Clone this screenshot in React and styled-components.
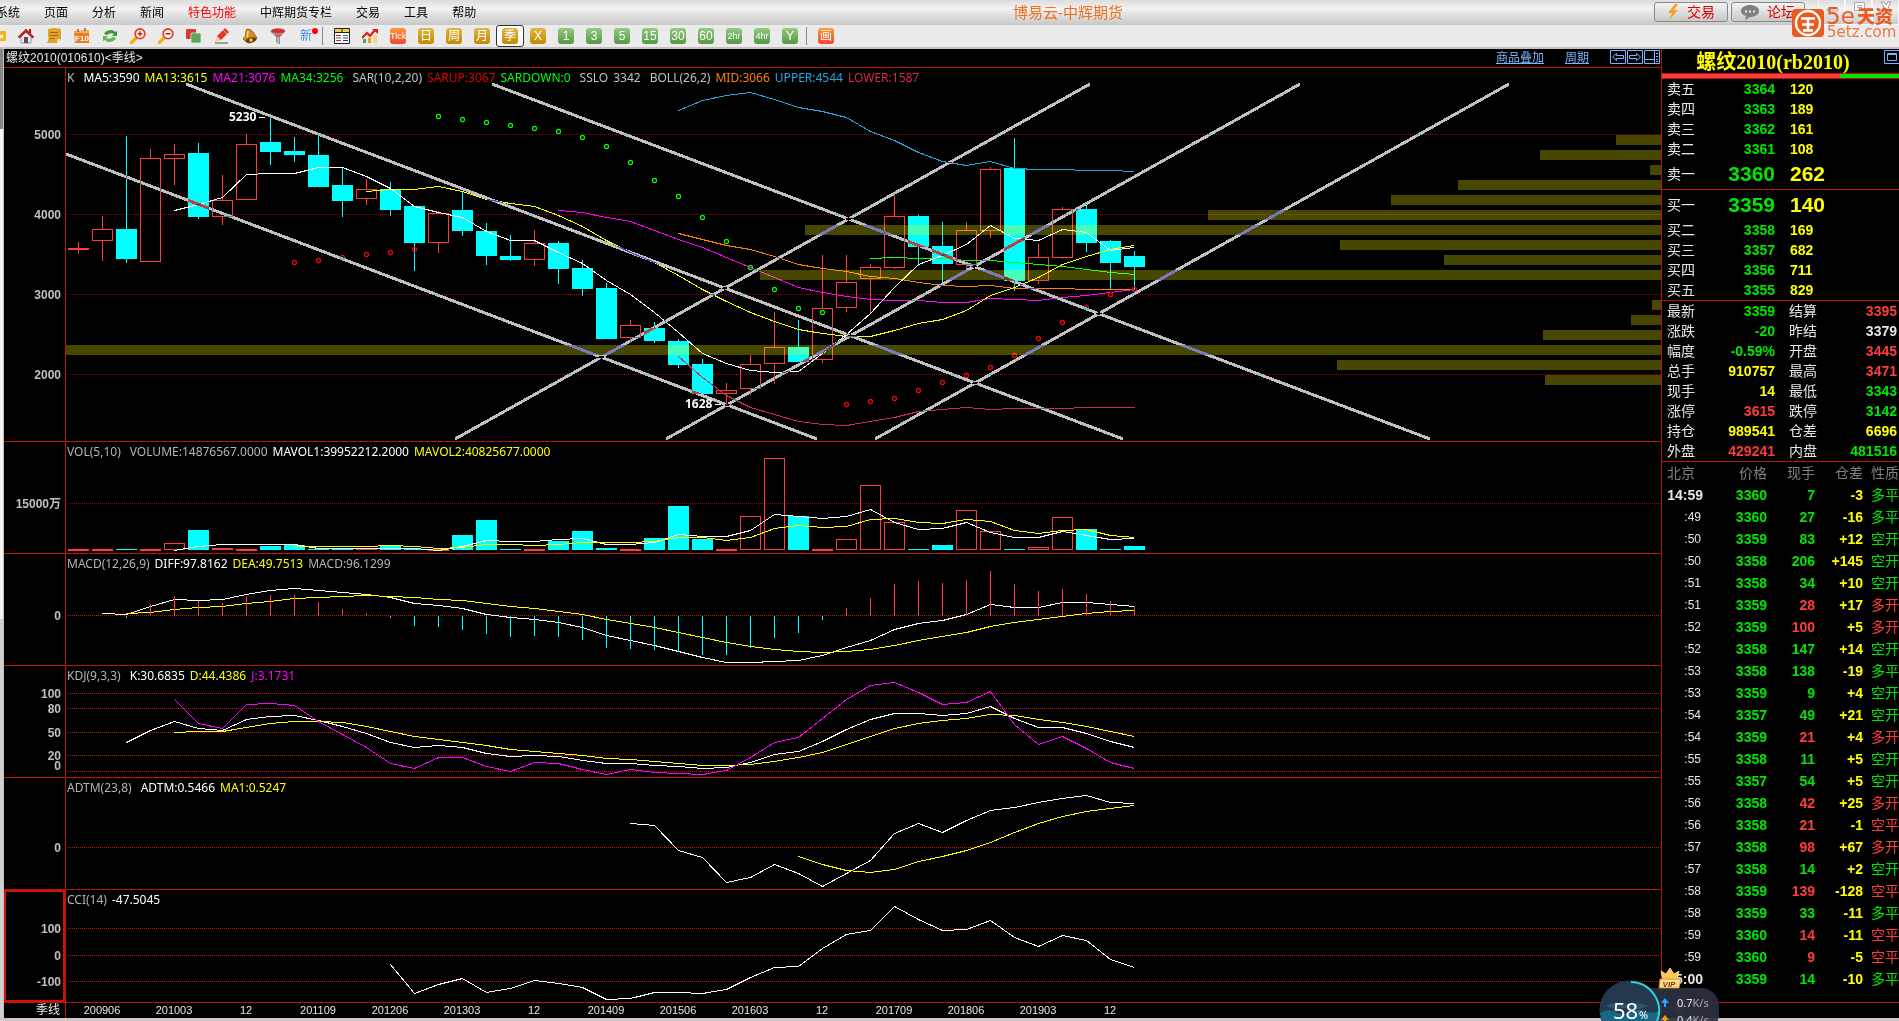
import styled, { createGlobalStyle, css } from 'styled-components';

const RED = '#ff3c3c';
const GREEN = '#00e600';
const YELLOW = '#ffff00';
const WHITE = '#e6e6e6';
const CYAN = '#00ffff';
const LINE = '#b81404';

const STEP = 24;
const BAR = 21;
const cx = (i) => 12 + STEP * i;

/* ---------- chart data (panel pixels) ---------- */

// high, body top, body bottom, low, 1 = rising
const candles = [
  [174, 180, 182, 186, 1], [148, 161, 173, 193, 1], [68, 161, 191, 195, 0], [81, 90, 194, 194, 1],
  [76, 86, 91, 117, 1], [75, 85, 149, 151, 0], [107, 132, 149, 157, 1], [66, 76, 132, 132, 1],
  [49, 74, 84, 97, 0], [69, 83, 87, 94, 0], [68, 87, 119, 119, 0], [99, 117, 133, 149, 0],
  [111, 121, 131, 137, 1], [114, 121, 142, 148, 0], [138, 138, 175, 203, 0], [143, 145, 175, 185, 1],
  [124, 142, 163, 168, 0], [155, 163, 188, 197, 0], [167, 188, 192, 193, 0], [162, 175, 192, 198, 1],
  [173, 175, 201, 216, 0], [192, 200, 221, 228, 0], [215, 220, 271, 271, 0], [252, 257, 270, 275, 1],
  [254, 260, 273, 275, 0], [271, 273, 297, 300, 0], [291, 296, 326, 326, 0], [315, 322, 326, 337, 1],
  [287, 296, 321, 327, 1], [244, 279, 296, 316, 1], [252, 279, 294, 294, 0], [187, 240, 292, 295, 1],
  [187, 214, 240, 244, 1], [196, 199, 211, 245, 1], [126, 148, 200, 201, 1], [147, 148, 179, 198, 0],
  [154, 178, 196, 214, 0], [154, 162, 197, 201, 1], [99, 101, 163, 170, 1], [70, 100, 213, 223, 0],
  [176, 189, 213, 216, 1], [139, 141, 190, 191, 1], [136, 141, 175, 184, 0], [172, 173, 195, 221, 0],
  [183, 188, 199, 222, 0],
];

const priceLines = [
  { color: '#29a3dc', from: 25, ys: [42, 32, 27, 24, 31, 39, 43, 49, 63, 72, 84, 93, 97, 93, 100, 101, 101, 102, 102, 103] },
  { color: '#d82848', from: 25, ys: [288, 309, 327, 339, 346, 353, 356, 357, 353, 349, 343, 341, 339, 341, 340, 340, 340, 339, 339, 339] },
  { color: '#ff8000', from: 25, ys: [165, 171, 177, 181, 188, 196, 200, 203, 208, 210, 214, 217, 218, 217, 220, 220, 220, 221, 221, 221] },
  { color: '#00ff00', from: 33, ys: [190, 189, 190, 190, 192, 192, 194, 196, 198, 201, 204, 206] },
  { color: '#ff00ff', from: 20, ys: [142, 144, 149, 153, 162, 171, 179, 189, 199, 209, 219, 224, 228, 231, 232, 232, 234, 234, 230, 231, 232, 229, 227, 224, 221] },
  { color: YELLOW, from: 12, ys: [123, 121, 121, 118, 123, 131, 135, 138, 147, 158, 172, 184, 194, 207, 221, 233, 244, 253, 261, 265, 268, 268, 262, 255, 251, 242, 227, 219, 209, 196, 188, 181, 177] },
  { color: '#ffffff', from: 4, ys: [142, 136, 129, 106, 105, 105, 99, 99, 108, 120, 138, 144, 149, 163, 172, 172, 184, 195, 212, 226, 244, 264, 285, 295, 302, 304, 303, 285, 266, 245, 219, 196, 187, 176, 157, 170, 172, 161, 164, 182, 179] },
];

const sar = [
  { color: '#ff0000', from: 9, ys: [194, 192, 189, 186, 184, 181] },
  { color: '#00ff00', from: 15, ys: [48, 51, 54, 57, 60, 63, 69, 78, 94, 112, 128, 149, 173, 199, 221, 240, 244] },
  { color: '#ff0000', from: 32, ys: [336, 333, 330, 322, 314, 307, 299, 287, 270, 254, 239, 226, 221] },
];

// [top, width] measured from the right edge of the plot
const profile = [
  [67, 45], [82, 121], [97, 11], [112, 203], [127, 270], [142, 453], [157, 856], [172, 321],
  [187, 217], [202, 901], [232, 9], [247, 30], [262, 118], [277, 1595], [292, 324], [307, 116],
];

const trends = [
  [120, 16, 1057, 371], [0, 86, 751, 371], [426, 16, 1364, 371],
  [389, 371, 1024, 16], [600, 371, 1234, 16], [809, 371, 1443, 16],
];

const volumeTops = [
  107, 107, 107, 107, 101, 88, 106, 107, 104, 103, 107, 107, 106, 103, 107, 107, 93, 78, 107, 107, 99, 89, 106,
  107, 96, 64, 97, 107, 74, 16, 74, 107, 97, 43, 80, 107, 103, 68, 89, 107, 105, 75, 87, 107, 104,
];

const volumeLines = [
  { color: '#ffffff', from: 4, ys: [108, 104, 102, 102, 102, 102, 106, 106, 106, 106, 106, 108, 104, 98, 99, 99, 97, 96, 102, 102, 100, 92, 94, 94, 88, 72, 74, 76, 74, 67, 80, 87, 86, 80, 90, 95, 95, 89, 93, 97, 96] },
  { color: YELLOW, from: 9, ys: [104, 104, 104, 104, 103, 104, 106, 105, 102, 102, 103, 102, 100, 100, 100, 99, 95, 95, 98, 95, 86, 83, 85, 84, 77, 76, 80, 81, 77, 79, 88, 91, 88, 87, 93, 95] },
];

const macdZero = 62;
const macdBars = {
  from: 2,
  ys: [64, 50, 42, 47, 49, 42, 41, 41, 48, 55, 59, 64, 72, 73, 76, 80, 83, 82, 83, 86, 94, 95, 96, 98, 101, 101, 94, 84, 79, 66, 54, 44, 30, 27, 29, 26, 17, 30, 37, 35, 40, 47, 52],
};
const macdLines = [
  { color: '#ffffff', from: 1, ys: [59, 60, 52, 45, 46, 45, 40, 36, 34, 36, 38, 40, 43, 49, 51, 54, 60, 63, 65, 68, 73, 81, 86, 91, 97, 103, 108, 108, 107, 106, 101, 93, 86, 75, 69, 66, 60, 50, 53, 53, 48, 48, 50, 52] },
  { color: YELLOW, from: 2, ys: [59, 58, 55, 53, 52, 49, 47, 44, 43, 42, 41, 42, 43, 45, 46, 49, 52, 54, 57, 60, 65, 69, 73, 78, 83, 88, 92, 95, 97, 98, 97, 95, 91, 86, 82, 78, 72, 68, 65, 62, 59, 57, 56] },
];

const kdjLines = [
  { color: '#ffffff', from: 2, ys: [76, 64, 55, 62, 64, 53, 50, 49, 54, 60, 67, 76, 81, 79, 81, 87, 90, 89, 90, 94, 97, 97, 99, 100, 102, 101, 96, 88, 85, 75, 63, 53, 47, 47, 49, 47, 40, 52, 61, 61, 67, 75, 81] },
  { color: YELLOW, from: 4, ys: [66, 65, 65, 61, 57, 55, 55, 56, 60, 65, 70, 73, 76, 79, 83, 85, 87, 89, 92, 93, 95, 97, 99, 99, 98, 95, 91, 86, 78, 70, 62, 57, 54, 52, 48, 49, 53, 56, 60, 65, 70] },
  { color: '#ff00ff', from: 4, ys: [33, 57, 62, 38, 37, 39, 55, 68, 81, 97, 102, 91, 91, 100, 105, 96, 97, 103, 108, 103, 106, 107, 108, 104, 91, 76, 71, 52, 33, 19, 16, 26, 38, 36, 25, 58, 78, 70, 82, 96, 102] },
];

const adtmLines = [
  { color: '#ffffff', from: 23, ys: [45, 47, 72, 79, 104, 99, 86, 95, 108, 95, 82, 55, 45, 54, 42, 32, 29, 24, 20, 17, 24, 25] },
  { color: YELLOW, from: 30, ys: [78, 86, 92, 94, 91, 83, 78, 72, 64, 54, 45, 38, 33, 30, 27] },
];

const cciLines = [
  { color: '#ffffff', from: 13, ys: [74, 103, 94, 88, 102, 98, 90, 93, 97, 109, 108, 102, 102, 103, 99, 87, 77, 76, 58, 44, 40, 16, 29, 40, 39, 30, 47, 56, 45, 50, 69, 77] },
];

const dates = ['200906', '201003', '12', '201109', '201206', '201303', '12', '201409', '201506', '201603', '12', '201709', '201806', '201903', '12'];

/* ---------- quote data ---------- */

const asks = [['卖五', 3364, 120], ['卖四', 3363, 189], ['卖三', 3362, 161], ['卖二', 3361, 108], ['卖一', 3360, 262, true]];
const bids = [['买一', 3359, 140, true], ['买二', 3358, 169], ['买三', 3357, 682], ['买四', 3356, 711], ['买五', 3355, 829]];

const stats = [
  ['最新', '3359', GREEN, '结算', '3395', RED],
  ['涨跌', '-20', GREEN, '昨结', '3379', WHITE],
  ['幅度', '-0.59%', GREEN, '开盘', '3445', RED],
  ['总手', '910757', YELLOW, '最高', '3471', RED],
  ['现手', '14', YELLOW, '最低', '3343', GREEN],
  ['涨停', '3615', RED, '跌停', '3142', GREEN],
  ['持仓', '989541', YELLOW, '仓差', '6696', YELLOW],
  ['外盘', '429241', RED, '内盘', '481516', GREEN],
];

const ticks = [
  ['14:59', 3360, 7, '-3', '多平', 0], [':49', 3360, 27, '-16', '多平', 0], [':50', 3359, 83, '+12', '空开', 0],
  [':50', 3358, 206, '+145', '空开', 0], [':51', 3358, 34, '+10', '空开', 0], [':51', 3359, 28, '+17', '多开', 1],
  [':52', 3359, 100, '+5', '多开', 1], [':52', 3358, 147, '+14', '空开', 0], [':53', 3358, 138, '-19', '多平', 0],
  [':53', 3359, 9, '+4', '空开', 0], [':54', 3357, 49, '+21', '空开', 0], [':54', 3359, 21, '+4', '多开', 1],
  [':55', 3358, 11, '+5', '空开', 0], [':55', 3357, 54, '+5', '空开', 0], [':56', 3358, 42, '+25', '多开', 1],
  [':56', 3358, 21, '-1', '空平', 1], [':57', 3358, 98, '+67', '多开', 1], [':57', 3358, 14, '+2', '空开', 0],
  [':58', 3359, 139, '-128', '空平', 1], [':58', 3359, 33, '-11', '多平', 0], [':59', 3360, 14, '-11', '空平', 1],
  [':59', 3360, 9, '-5', '空平', 1], ['15:00', 3359, 14, '-10', '多平', 0],
];

/* ---------- icons ---------- */

const Icon = ({ children }) => <svg width="16" height="16" viewBox="0 0 16 16" aria-hidden="true">{children}</svg>;

const Magnifier = ({ plus }) => (
  <Icon>
    <path d="M6.5 9.5 1.5 14.5" stroke="#f0b010" strokeWidth="3.2" strokeLinecap="round" />
    <circle cx="10" cy="5.8" r="4.8" fill="#fff" stroke="#e8402c" strokeWidth="1.8" />
    <path d={plus ? 'M7.5 5.8h5M10 3.3v5' : 'M7.5 5.8h5'} stroke="#e02010" strokeWidth="1.6" />
  </Icon>
);

const icons = {
  folder: <Icon><path d="M2 3h14v10H2z" fill="#f5b818" /><path d="M4 7h9v3H4z" fill="#fff" /></Icon>,
  home: (
    <Icon>
      <path d="M3 8v7h10V8L8 4z" fill="#e8eef4" stroke="#8898a8" />
      <path d="M11 1h2v4h-2z" fill="#a01818" />
      <path d="M0 9 8 1l8 8-1.5 1L8 4 1.5 10z" fill="#d01c24" stroke="#a01018" strokeWidth=".6" />
      <path d="M6 9h4v6H6z" fill="#704838" />
    </Icon>
  ),
  note: (
    <Icon>
      <path d="M2 1q7-2 13 0v10l-4 4H1q2-3 1-7z" fill="#e0a22c" />
      <path d="M15 11h-4v4z" fill="#f8dc98" />
      <path d="M4 4.500h8M4 7.500h8M4 10.500h5" stroke="#a86c10" />
    </Icon>
  ),
  f10: (
    <Icon>
      <path d="M0 3.500 15 2v13H1z" fill="#ee7a24" />
      <path d="M0 3.500 15 2v3H0z" fill="#f8ae50" />
      <path d="M4 1v3M11 0v3" stroke="#b85010" strokeWidth="1.5" />
      <text x="8" y="13" fontSize="8" fontWeight="700" textAnchor="middle" fill="#fff" fontFamily="Liberation Sans">F10</text>
    </Icon>
  ),
  refresh: (
    <Icon>
      <path d="M2 6q2-4 7-4 3 0 4 2l2-1v5h-5l2-2q-4-2-7 1z" fill="#3c9a34" />
      <path d="M14 10q-2 4-7 4-3 0-4-2l-2 1V8h5l-2 2q4 2 7-1z" fill="#62b84c" />
    </Icon>
  ),
  zoomIn: <Magnifier plus />,
  zoomOut: <Magnifier />,
  layers: (
    <Icon>
      <rect x="0" y="1" width="10" height="10" rx="1" fill="#d83c34" />
      <rect x="5" y="5" width="10" height="10" rx="1" fill="#62a458" stroke="#d8ecd0" strokeWidth=".8" />
    </Icon>
  ),
  pencil: (
    <Icon>
      <path d="M1 15h13" stroke="#555" />
      <path d="m1 14 2-6 4 4z" fill="#f5cf90" />
      <path d="M3 8 11 0l4 4-8 8z" fill="#e43828" />
      <path d="m9 2 4 4" stroke="#f8a090" />
    </Icon>
  ),
  bell: (
    <Icon>
      <path d="M5 1q4 0 6 3l4 6q-3 5-9 5l-5-4q3-2 3-8z" fill="#d89020" stroke="#8a5208" strokeWidth=".8" />
      <ellipse cx="9" cy="12" rx="5.5" ry="2.5" fill="#6a3c08" transform="rotate(-12 9 12)" />
      <circle cx="9" cy="12" r="1.7" fill="#f8d060" />
      <path d="M6 3q0 4-1 6" stroke="#fbe090" strokeWidth="1.4" fill="none" />
    </Icon>
  ),
  filter: (
    <Icon>
      <path d="M1 3.500 6.500 9v5l3 2V9L15 3.500z" fill="#b8b8b8" stroke="#777" strokeWidth=".7" />
      <ellipse cx="8" cy="3" rx="7" ry="2.400" fill="#e02828" stroke="#888" strokeWidth=".7" />
      <path d="M4 5.500 6.500 9h3L12 5.500q-4 2-8 0z" fill="#e05050" />
    </Icon>
  ),
  list: (
    <Icon>
      <path d="M.5.5h15v15H.5z" fill="#fff" stroke="#222" />
      <path d="M1 1h14v3H1z" fill="#f5d050" />
      <path d="M.5 4.500h15M8 1v3" stroke="#222" />
      <path d="M2 7.500h5M2 12.500h5" stroke="#e02020" />
      <path d="M2 10h5M9 7.500h5" stroke="#209020" />
      <path d="M9 10h5M9 12.500h5" stroke="#2030a0" />
    </Icon>
  ),
  trend: (
    <Icon>
      <path d="M1 11h3v4H1z" fill="#58a838" />
      <path d="M6 10h3v5H6z" fill="#e8a020" />
      <path d="M11 7h4v8h-4z" fill="#f0d888" />
      <path d="m0 10 5-5 3 3 5-6" stroke="#e01818" strokeWidth="2" fill="none" />
      <path d="M10 1h6v5z" fill="#e01818" />
    </Icon>
  ),
};

const tools = [
  { label: '打开', icon: 'folder' }, { label: '首页', icon: 'home' }, { label: '公告', icon: 'note' },
  { label: '资料', icon: 'f10' }, { label: '刷新', icon: 'refresh' }, { label: '放大', icon: 'zoomIn' },
  { label: '缩小', icon: 'zoomOut' }, { label: '叠加', icon: 'layers' }, { label: '画线', icon: 'pencil' },
  { label: '预警', icon: 'bell' }, { label: '过滤', icon: 'filter' }, { text: '新', tone: 'news' }, { sep: true },
  { label: '报价', icon: 'list' }, { label: '分时', icon: 'trend' }, { text: 'Tick', tone: 'red' },
  { text: '日', tone: 'gold' }, { text: '周', tone: 'gold' }, { text: '月', tone: 'gold' },
  { text: '季', tone: 'gold', active: true }, { text: 'X', tone: 'gold' }, { text: '1', tone: 'green' },
  { text: '3', tone: 'green' }, { text: '5', tone: 'green' }, { text: '15', tone: 'green' },
  { text: '30', tone: 'green' }, { text: '60', tone: 'green' }, { text: '2hr', tone: 'green' },
  { text: '4hr', tone: 'green' }, { text: 'Y', tone: 'green' }, { sep: true }, { text: '画', tone: 'red' },
];

const menus = ['系统', '页面', '分析', '新闻', '特色功能', '中辉期货专栏', '交易', '工具', '帮助'];

/* ---------- chart parts ---------- */

const Series = ({ lines }) => lines.map(({ color, from, ys }, n) => (
  <polyline key={n} fill="none" stroke={color} points={ys.map((y, i) => `${cx(from + i) + 0.5},${y + 0.5}`).join(' ')} />
));

const Grid = ({ rows, color = '#c81400' }) => rows.map((y) => (
  <line key={y} x1="2" x2="100%" y1={y + 0.5} y2={y + 0.5} stroke={color} strokeDasharray="1 1" />
));

const Bar = ({ i, top, bottom, up }) => {
  const x = cx(i) - 10;
  return up
    ? <rect x={x + 0.5} y={top + 0.5} width={BAR - 1} height={Math.max(bottom - top - 1, 0.5)} fill="none" stroke={RED} />
    : <rect x={x} y={top} width={BAR} height={bottom - top} fill={CYAN} />;
};

function Panel({ height, ticks: marks, readout, active, children }) {
  return (
    <PanelRow $height={height}>
      <Axis $active={active}>
        <Plot>
          {marks.map(([y, text]) => <AxisText key={text} x="57" y={y + 4} textAnchor="end">{text}</AxisText>)}
        </Plot>
      </Axis>
      <PlotArea>
        <Plot>{children}</Plot>
        <Readout>
          {readout.map(([text, color, wide]) => <Value key={text} $color={color} $wide={wide}>{text}</Value>)}
        </Readout>
      </PlotArea>
    </PanelRow>
  );
}

function PricePanel() {
  const gray = '#c0c0c0';
  return (
    <Panel
      height={373}
      ticks={[[67, '5000'], [147, '4000'], [227, '3000'], [307, '2000']]}
      readout={[
        ['K', gray, 1], ['MA5:3590', '#ffffff'], ['MA13:3615', YELLOW], ['MA21:3076', '#ff00ff'], ['MA34:3256', '#00ff00', 1],
        ['SAR(10,2,20)', gray], ['SARUP:3067', '#e00000'], ['SARDOWN:0', '#00ff00', 1], ['SSLO', gray], ['3342', gray, 1],
        ['BOLL(26,2)', gray], ['MID:3066', '#ff8000'], ['UPPER:4544', '#29a3dc'], ['LOWER:1587', '#d82848'],
      ]}
    >
      <Grid rows={[66, 146, 226, 306]} color="#a00000" />
      {candles.map(([hi, top, bottom, lo, up], i) => (
        <g key={i}>
          <path
            d={`M${cx(i) + 0.5} ${hi}V${up ? top : bottom}M${cx(i) + 0.5} ${bottom}V${lo}`}
            stroke={up ? RED : CYAN}
          />
          <Bar i={i} top={top} bottom={bottom} up={up} />
        </g>
      ))}
      <Series lines={priceLines} />
      {sar.map(({ color, from, ys }) => ys.map((y, i) => (
        <ellipse key={`${from}-${i}`} cx={cx(from + i) + 0.5} cy={y + 0.5} rx="2" ry="2.2" fill="none" stroke={color} strokeWidth="1.2" shapeRendering="auto" />
      )))}
      <svg x="100%" overflow="visible">
        {profile.map(([top, width]) => <rect key={top} x={-width} y={top} width={width} height="10" fill="rgba(255,255,0,.28)" />)}
      </svg>
      {trends.map(([x1, y1, x2, y2], i) => <Trend key={i} x1={x1} y1={y1} x2={x2} y2={y2} />)}
      <MarkText x="163" y="53">5230</MarkText>
      <MarkText x="619" y="340">1628</MarkText>
      <path d="M193 49.500h6M649 336.500h6" stroke="#fff" />
    </Panel>
  );
}

function Charts() {
  const gray = '#b4b4b4';
  return (
    <>
      <PricePanel />
      <Panel
        height={111}
        ticks={[[62, '15000万']]}
        readout={[['VOL(5,10)', gray, 1], ['VOLUME:14876567.0000', gray], ['MAVOL1:39952212.2000', '#ffffff'], ['MAVOL2:40825677.0000', YELLOW]]}
      >
        <Grid rows={[61]} color="#a00000" />
        {volumeTops.map((top, i) => <Bar key={i} i={i} top={top} bottom={108} up={candles[i][4]} />)}
        <Series lines={volumeLines} />
      </Panel>
      <Panel
        height={111}
        ticks={[[62, '0']]}
        readout={[['MACD(12,26,9)', gray], ['DIFF:97.8162', '#ffffff'], ['DEA:49.7513', YELLOW], ['MACD:96.1299', gray]]}
      >
        <Grid rows={[61]} />
        <Series lines={macdLines} />
        {macdBars.ys.map((y, i) => (
          <path key={i} d={`M${cx(macdBars.from + i) + 0.5} ${y}V${macdZero}`} stroke={y < macdZero ? RED : CYAN} />
        ))}
      </Panel>
      <Panel
        height={111}
        ticks={[[28, '100'], [43, '80'], [67, '50'], [90, '20'], [100, '0']]}
        readout={[['KDJ(9,3,3)', gray, 1], ['K:30.6835', '#ffffff'], ['D:44.4386', YELLOW], ['J:3.1731', '#ff00ff']]}
      >
        <Grid rows={[27, 42, 66, 89, 105]} />
        <Series lines={kdjLines} />
      </Panel>
      <Panel
        height={111}
        ticks={[[70, '0']]}
        readout={[['ADTM(23,8)', gray, 1], ['ADTM:0.5466', '#ffffff'], ['MA1:0.5247', YELLOW]]}
      >
        <Grid rows={[69]} />
        <Series lines={adtmLines} />
      </Panel>
      <Panel
        height={112}
        active
        ticks={[[39, '100'], [66, '0'], [92, '-100']]}
        readout={[['CCI(14)', gray], ['-47.5045', '#ffffff']]}
      >
        <Grid rows={[38, 65, 91]} />
        <Series lines={cciLines} />
      </Panel>
      <TimeAxis>
        <PeriodName>季线</PeriodName>
        {dates.map((d, i) => <DateLabel key={i}>{d}</DateLabel>)}
      </TimeAxis>
    </>
  );
}

/* ---------- side panel ---------- */

const Book = ({ rows, caption }) => (
  <QuoteTable aria-label={caption}>
    <colgroup><Col $w={46} /><Col $w={67} /><col /></colgroup>
    <tbody>
      {rows.map(([name, price, size, big]) => (
        <Row key={name} $h={big ? 30 : 20}>
          <Name scope="row">{name}</Name>
          <Num $color={GREEN} $big={big}>{price}</Num>
          <Num $color={YELLOW} $big={big} $left>{size}</Num>
        </Row>
      ))}
    </tbody>
  </QuoteTable>
);

function Quotes() {
  return (
    <Side>
      <SideHead>
        <Instrument>螺纹2010(rb2010)</Instrument>
        <IconButton aria-label="最大化">
          <svg width="15" height="14" viewBox="0 0 15 14"><path d="M.5.5h16v13H.5z" fill="none" stroke="#78b4ff" /><path d="M3.500 3.500h9v7h-9zM3 4.500h10" fill="none" stroke="#78b4ff" /></svg>
        </IconButton>
      </SideHead>
      <Ratio><RatioBuy style={{ flexGrow: 178 }} /><RatioSell style={{ flexGrow: 59 }} /></Ratio>
      <Book rows={asks} caption="卖盘" />
      <Book rows={bids} caption="买盘" />
      <QuoteTable aria-label="行情">
        <colgroup><Col $w={46} /><Col $w={67} /><Col $w={60} /><col /></colgroup>
        <tbody>
          {stats.map(([a, av, ac, b, bv, bc]) => (
            <Row key={a} $h={20}>
              <Name scope="row">{a}</Name>
              <Num $color={ac}>{av}</Num>
              <Name scope="row" $inset>{b}</Name>
              <Num $color={bc} $edge>{bv}</Num>
            </Row>
          ))}
        </tbody>
      </QuoteTable>
      <QuoteTable aria-label="成交明细" $plain>
        <colgroup><Col $w={41} /><Col $w={64} /><Col $w={48} /><Col $w={48} /><col /></colgroup>
        <thead>
          <Row $h={22}>
            <Head $left>北京</Head><Head>价格</Head><Head>现手</Head><Head>仓差</Head><Head>性质</Head>
          </Row>
        </thead>
        <tbody>
          {ticks.map(([time, price, size, diff, kind, up], i) => (
            <Row key={i} $h={22}>
              <Time $full={time.length > 3}>{time}</Time>
              <Num $color={GREEN}>{price}</Num>
              <Num $color={up ? RED : GREEN}>{size}</Num>
              <Num $color={YELLOW}>{diff}</Num>
              <Kind $color={up ? RED : GREEN}>{kind}</Kind>
            </Row>
          ))}
        </tbody>
      </QuoteTable>
      <Tabs><Tab>笔</Tab></Tabs>
    </Side>
  );
}

/* ---------- floating bits ---------- */

const Watermark = () => (
  <Mark width="104" height="32" viewBox="0 0 104 32" aria-label="5e天资 5etz.com">
    <rect x="0" y="2" width="32" height="28" rx="4" fill="#e85c20" />
    <circle cx="16" cy="16" r="12" fill="none" stroke="#fff" strokeWidth="2.400" />
    <path d="M9 11.500h14M16 11.500v12M10 17.500h12M11 23.500h10" stroke="#fff" strokeWidth="2.600" fill="none" />
    <text x="34" y="17" fontSize="23" fill="#e85c20" fontFamily="DejaVu Sans">5e</text>
    <text x="65" y="16" fontSize="18" fontWeight="900" fill="#e85c20" fontFamily="Noto Sans CJK SC">天资</text>
    <text x="35" y="30" fontSize="15" fill="#e87848" fontFamily="DejaVu Sans">5etz.com</text>
  </Mark>
);

const NetWidget = () => (
  <Net width="122" height="54" viewBox="0 0 122 54">
    <rect x="36" y="21" width="85" height="44" rx="18" fill="#2c3040" fillOpacity=".92" />
    <circle cx="31" cy="43" r="29.500" fill="#24384e" />
    <path d="M2 46q8-5 16-1t14 0 14-1 14 0v10H4z" fill="#176880" />
    <path d="M8 39q10-6 18-1 12-5 24 1-12 6-24 2-10 3-18-2z" fill="#2c5468" />
    <path d="M33 15a28.500 28.500 0 0 1 26 39" fill="none" stroke="#28d8d8" strokeWidth="2" />
    <text x="15" y="52" fontSize="22" fill="#fff" fontFamily="Noto Sans">58</text>
    <text x="41" y="52" fontSize="11" fill="#fff" fontFamily="Noto Sans">%</text>
    <path d="m67 31 4 5h-3v4h-2v-4h-3z" fill="#20a8ff" />
    <path d="m67 48 4 5h-3v4h-2v-4h-3z" fill="#ff9820" />
    <text x="79" y="40" fontSize="11" fill="#e8e8e8" fontFamily="Noto Sans">0.7<tspan fill="#a8a8a8">K/s</tspan></text>
    <text x="79" y="57" fontSize="11" fill="#e8e8e8" fontFamily="Noto Sans">0.4<tspan fill="#a8a8a8">K/s</tspan></text>
    <path d="m65 13-2-9 5 3 4-6 4 6 5-3-2 9z" fill="#ffc84c" stroke="#fff0c0" strokeWidth=".8" />
    <path d="M62 12h21l-2 9H61z" fill="#ffd88c" stroke="#d08820" strokeWidth=".8" />
    <text x="71" y="20" fontSize="8" fontWeight="700" fontStyle="italic" textAnchor="middle" fill="#7a4008" fontFamily="Liberation Sans">VIP</text>
  </Net>
);

function App() {
  return (
    <Page>
      <GlobalStyle />
      <MenuBar>
        <Menu>
          {menus.map((m) => <MenuItem key={m} $hot={m === '特色功能'}>{m}</MenuItem>)}
        </Menu>
        <AppTitle>博易云-中辉期货</AppTitle>
        <Actions>
          <ActionButton>
            <svg width="12" height="16" viewBox="0 0 12 16"><path d="M8 0 1 9h4l-3 7 9-10H7l4-6z" fill="#f5a020" /></svg>
            交易
          </ActionButton>
          <ActionButton>
            <svg width="18" height="15" viewBox="0 0 18 15"><path d="M9 0c5 0 9 2.500 9 6s-4 6-9 6l-5 3 1-4C2 10 0 8.500 0 6c0-3.500 4-6 9-6z" fill="#808080" /><path d="M4 5.500h2v2H4zM8 5.500h2v2H8zM12 5.500h2v2h-2z" fill="#e8e8e8" /></svg>
            论坛
          </ActionButton>
        </Actions>
        <WindowButtons>
          <WindowButton aria-label="最小化"><Icon><path d="M3 8h11v2H3z" fill="#fff" stroke="#aaa" /></Icon></WindowButton>
          <WindowButton aria-label="还原"><Icon><path d="M3.500 1.500h10v8h-10zM6.500 4.500h4v2h-4z" fill="#fff" stroke="#aaa" /></Icon></WindowButton>
          <WindowButton aria-label="关闭"><Icon><path d="M3 1h3l2 3 2-3h3l-3 5 3 4h-3L8 7l-2 3H3l3-4z" fill="#fff" stroke="#999" /></Icon></WindowButton>
        </WindowButtons>
      </MenuBar>
      <Toolbar>
        {tools.map((t, i) => (t.sep ? <Separator key={i} /> : (
          <Tool key={i} $active={t.active} aria-label={t.label}>
            {t.icon ? icons[t.icon] : <Badge $tone={t.tone} $small={t.text.length > 2}>{t.text}</Badge>}
            {t.tone === 'news' && <Dot />}
          </Tool>
        )))}
      </Toolbar>
      <Workspace>
        <Gutter />
        <Main>
          <ChartHead>
            <ChartName>螺纹2010(010610)&lt;季线&gt;</ChartName>
            <HeadLink href="#overlay">商品叠加</HeadLink>
            <HeadLink href="#period">周期</HeadLink>
            <HeadIcons>
              <IconButton aria-label="后退">
                <svg width="16" height="14" viewBox="0 0 16 14"><path d="M.5.5h15v13H.5zM2.500 7l4-3.500v2h7v3h-7v2z" fill="none" stroke="#78b4ff" /></svg>
              </IconButton>
              <IconButton aria-label="前进">
                <svg width="16" height="14" viewBox="0 0 16 14"><path d="M.5.5h15v13H.5zM13.500 7l-4-3.500v2h-7v3h7v2z" fill="none" stroke="#78b4ff" /></svg>
              </IconButton>
              <IconButton aria-label="布局">
                <svg width="16" height="14" viewBox="0 0 16 14"><path d="M.5.5h15v13H.5zM10.500 0v14M0 9.500h10M12 3.500h2M12 6.500h2M12 9.500h2M12 11.500h2" fill="none" stroke="#78b4ff" /></svg>
              </IconButton>
            </HeadIcons>
          </ChartHead>
          <Charts />
        </Main>
        <Quotes />
      </Workspace>
      <Footer />
      <Watermark />
      <NetWidget />
    </Page>
  );
}

export default App;

/* ---------- styles ---------- */

const GlobalStyle = createGlobalStyle`
  *, *::before, *::after { box-sizing: border-box; }
  body {
    margin: 0;
    background: #000;
    color: ${WHITE};
    font: 12px "Liberation Sans", "Noto Sans CJK SC", sans-serif;
  }
  button { font: inherit; margin: 0; padding: 0; border: 0; background: none; color: inherit; }
  svg { display: block; }
`;

const Page = styled.div`
  position: relative;
  min-height: 100vh;
  display: flex;
  flex-direction: column;
  overflow: hidden;
`;

const MenuBar = styled.header`
  display: flex;
  height: 25px;
  background: linear-gradient(#dcdcdc, #f2f2f2 35%, #e4e4e4 55%, #c8c8c8);
  color: #000;
`;

const Menu = styled.nav`
  display: flex;
  gap: 24px;
  margin-left: -4px;
`;

const MenuItem = styled.button`
  line-height: 26px;
  white-space: nowrap;
  color: ${({ $hot }) => ($hot ? '#ff0000' : '#000')};
`;

const AppTitle = styled.div`
  flex: 1;
  padding-left: 6px;
  text-align: center;
  font-size: 15px;
  line-height: 25px;
  color: #f07020;
`;

const Actions = styled.div`
  display: flex;
  gap: 3px;
  padding-top: 2px;
`;

const ActionButton = styled.button`
  display: flex;
  align-items: center;
  justify-content: center;
  gap: 8px;
  width: 74px;
  height: 20px;
  border: 1px solid #888;
  border-radius: 3px;
  background: linear-gradient(#f4f4f4, #c8c8c8);
  color: #e00000;
  font-size: 14px;
  line-height: 18px;
`;

const WindowButtons = styled.div`
  display: flex;
  margin-left: 13px;
`;

const WindowButton = styled.button`
  display: flex;
  justify-content: center;
  width: 27px;
  height: 25px;
  padding-top: 1px;
  border: solid #f8f8f8;
  border-width: 0 1px 1px;
`;

const Toolbar = styled.div`
  display: flex;
  height: 24px;
  padding-right: 16px;
  background: #ebebeb;
  border-bottom: 2px solid #c8c0c0;

  > :first-child { margin-left: -16px; }
`;

const Tool = styled.button`
  position: relative;
  display: flex;
  align-items: center;
  justify-content: center;
  width: 28px;
  height: 22px;
  ${({ $active }) => $active && css`
    background: #fff;
    border: 1px solid #333;
    border-radius: 3px;
  `}
`;

const Separator = styled.i`
  width: 1px;
  height: 18px;
  margin: 2px 5px 0 2px;
  background: #888;
`;

const tones = {
  gold: 'linear-gradient(#dcb848, #c48800)',
  green: 'linear-gradient(#94cc80, #559646)',
  red: 'linear-gradient(#ff9a40, #f04830)',
  news: 'none',
};

const Badge = styled.span`
  width: 16px;
  height: 16px;
  border-radius: 3px;
  background: ${({ $tone }) => tones[$tone]};
  color: ${({ $tone }) => ($tone === 'news' ? '#3c8ce8' : '#fff')};
  font-size: ${({ $small }) => ($small ? 9 : 12)}px;
  line-height: 16px;
  text-align: center;
`;

const Dot = styled.i`
  position: absolute;
  top: 3px;
  right: 2px;
  width: 6px;
  height: 6px;
  border-radius: 50%;
  background: #ff0000;
`;

const Workspace = styled.div`
  display: flex;
  flex: 1;
`;

const Gutter = styled.div`
  width: 4px;
  border-right: 1px solid #c8c0c0;
  background: linear-gradient(#888 80px, #f4f4f0 80px 570px, #d0d0d0 570px);
`;

const Main = styled.main`
  flex: 1;
  min-width: 0;
`;

const ChartHead = styled.div`
  display: flex;
  height: 19px;
  padding: 1px 1px 0 2px;
  border-bottom: 1px solid ${LINE};
  line-height: 17px;
`;

const ChartName = styled.h1`
  flex: 1;
  margin: 0;
  font-size: 12px;
  font-weight: 400;
`;

const HeadLink = styled.a`
  margin-right: 21px;
  color: #78b4ff;
`;

const HeadIcons = styled.div`
  display: flex;
  gap: 1px;
`;

const IconButton = styled.button`
  height: 14px;
`;

const PanelRow = styled.section`
  display: flex;
  height: ${({ $height }) => $height + 1}px;
  border-bottom: 1px solid ${LINE};
`;

const Axis = styled.div`
  flex: none;
  width: 62px;
  border-right: 1px solid ${LINE};
  ${({ $active }) => $active && css`box-shadow: inset 0 0 0 2px #d01400;`}
`;

const PlotArea = styled.div`
  position: relative;
  flex: 1;
  min-width: 0;
`;

const Plot = styled.svg`
  width: 100%;
  height: 100%;
  overflow: hidden;
  shape-rendering: crispEdges;
`;

const Trend = styled.line`
  stroke: #c0c0c0;
  stroke-width: 3px;
  mix-blend-mode: difference;
`;

const AxisText = styled.text`
  fill: #c0c0c0;
  font-size: 12px;
  font-weight: 700;
`;

const MarkText = styled.text`
  fill: #fff;
  font: bold 12px "Noto Sans", sans-serif;
`;

const Readout = styled.div`
  position: absolute;
  top: 0;
  left: 1px;
  display: flex;
  gap: 5px;
  font-family: "Noto Sans", sans-serif;
  line-height: 20px;
  white-space: nowrap;
`;

const Value = styled.span`
  color: ${({ $color }) => $color};
  margin-right: ${({ $wide }) => ($wide ? 4 : 0)}px;
`;

const TimeAxis = styled.div`
  display: flex;
  height: 15px;
  font-size: 11px;
  line-height: 15px;
`;

const PeriodName = styled.span`
  flex: none;
  width: 62px;
  padding-right: 5px;
  border-right: 1px solid ${LINE};
  font-size: 12px;
  text-align: right;
`;

const DateLabel = styled.span`
  width: 72px;
  text-align: center;
`;

const Side = styled.aside`
  display: flex;
  flex-direction: column;
  flex: none;
  width: 238px;
  border-left: 1px solid ${LINE};
`;

const SideHead = styled.div`
  display: flex;
  height: 25px;
  padding-top: 1px;
  border-bottom: 1px solid ${LINE};
`;

const Instrument = styled.h2`
  flex: 1;
  margin: 0;
  color: ${YELLOW};
  font: bold 20px/24px "Liberation Serif", "Noto Sans CJK SC", serif;
  text-align: center;
`;

const Ratio = styled.div`
  display: flex;
  height: 5px;
  border-bottom: 1px solid ${LINE};
`;

const RatioBuy = styled.div`
  background: ${RED};
`;

const RatioSell = styled.div`
  background: ${GREEN};
`;

const QuoteTable = styled.table`
  width: 100%;
  table-layout: fixed;
  border-spacing: 0;
  border-bottom: ${({ $plain }) => ($plain ? 'none' : `1px solid ${LINE}`)};
  font-size: 14px;
`;

const Col = styled.col`
  width: ${({ $w }) => $w}px;
`;

const Row = styled.tr`
  height: ${({ $h }) => $h}px;
  line-height: ${({ $h }) => $h}px;

  > * { padding: 0; white-space: nowrap; }
`;

const Name = styled.th`
  && { padding-left: ${({ $inset }) => ($inset ? 14 : 5)}px; }
  font-weight: 400;
  text-align: left;
`;

const Num = styled.td`
  && {
    padding-left: ${({ $left }) => ($left ? 15 : 0)}px;
    padding-right: ${({ $edge }) => ($edge ? 2 : 0)}px;
  }
  color: ${({ $color }) => $color};
  font-size: ${({ $big }) => ($big ? 21 : 14)}px;
  font-weight: 700;
  text-align: ${({ $left }) => ($left ? 'left' : 'right')};
`;

const Head = styled.th`
  && { padding-left: ${({ $left }) => ($left ? 5 : 0)}px; }
  color: #808080;
  font-weight: 400;
  text-align: ${({ $left }) => ($left ? 'left' : 'right')};
`;

const Time = styled.td`
  && { padding-right: ${({ $full }) => ($full ? 0 : 2)}px; }
  font-size: ${({ $full }) => ($full ? 14 : 12)}px;
  font-weight: ${({ $full }) => ($full ? 700 : 400)};
  text-align: right;
`;

const Kind = styled.td`
  color: ${({ $color }) => $color};
  text-align: right;
`;

const Tabs = styled.div`
  height: 16px;
  margin-top: auto;
  border-top: 1px solid ${LINE};
`;

const Tab = styled.button`
  display: block;
  width: 37px;
  height: 15px;
  border-right: 1px solid ${LINE};
  color: #808080;
  line-height: 15px;
`;

const Footer = styled.footer`
  height: 3px;
  background: #d0c8c8;
`;

const Mark = styled.svg`
  position: absolute;
  top: 7px;
  right: 3px;
`;

const Net = styled.svg`
  position: absolute;
  right: 179px;
  bottom: 0;
`;
